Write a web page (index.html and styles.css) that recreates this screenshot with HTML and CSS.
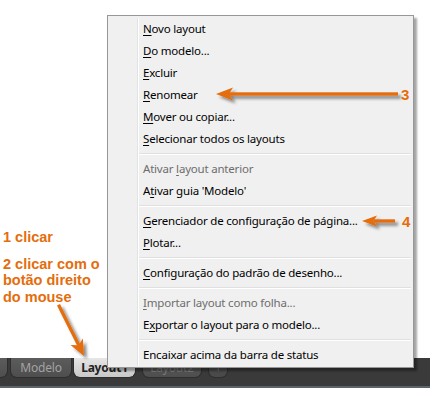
FILE: index.html
```html
<!DOCTYPE html>
<html lang="pt">
  <head>
    <meta charset="UTF-8" />
    <title>Layout menu</title>
    <link rel="stylesheet" href="styles.css">
  </head>
  <body>
    <div class="stage">
      <div class="notes">
        <p class="note-1">1 clicar</p>
        <p>2 clicar com o<br />botão direito<br />do mouse</p>
      </div>
    </div>

    <div class="tabbar">
      <div class="tab tab-edge"></div>
      <div class="tab model">Modelo</div>
      <div class="tab active">Layout1</div>
      <div class="tab dim">Layout2</div>
      <div class="tab plus">+</div>
    </div>

    <!-- context menu over the tabs -->
    <div class="menu">
      <div class="gutter"></div>
      <ul class="items">
        <li><u>N</u>ovo layout</li>
        <li><u>D</u>o modelo...</li>
        <li><u>E</u>xcluir</li>
        <li><u>R</u>enomear</li>
        <li><u>M</u>over ou copiar...</li>
        <li><u>S</u>elecionar todos os layouts</li>
        <li class="sep"></li>
        <li class="off">Ativar <u>l</u>ayout anterior</li>
        <li>A<u>t</u>ivar guia 'Modelo'</li>
        <li class="sep"></li>
        <li><u>G</u>erenciador de configuração de página...</li>
        <li><u>P</u>lotar...</li>
        <li class="sep"></li>
        <li><u>C</u>onfiguração do padrão de desenho...</li>
        <li class="sep"></li>
        <li class="off"><u>I</u>mportar layout como folha...</li>
        <li>E<u>x</u>portar o layout para o modelo...</li>
        <li class="sep"></li>
        <li>Encaixar acima da barra de status</li>
      </ul>
    </div>

    <svg class="arrows" width="440" height="396" viewBox="0 0 440 396">
      <defs>
        <filter id="shade" x="-20%" y="-50%" width="140%" height="200%">
          <feDropShadow dx="3" dy="3" stdDeviation="1.5" flood-color="#000" flood-opacity="0.45" />
        </filter>
      </defs>
      <g fill="#e46d0c" stroke="none" filter="url(#shade)">
        <rect x="229" y="92.3" width="169" height="3.4" />
        <polygon points="216,94 233,87.5 229,94 233,100.5" />
        <rect x="374" y="219.3" width="21" height="3.4" />
        <polygon points="362,221 377,215.5 373.5,221 377,226.5" />
        <polygon points="57,305.5 60,304 80.3,344.5 77.3,346" />
        <polygon points="84,356 82.9,338.5 78.6,345.3 70.5,344.9" />
      </g>
      <text class="num" x="401" y="100">3</text>
      <text class="num" x="402" y="227">4</text>
    </svg>
  </body>
</html>
```

FILE: styles.css
```css
*{
    margin: 0px;
    padding: 0px;
    box-sizing: border-box;
}
body{
    background: #fff;
    width: 440px;
    height: 396px;
    position: relative;
    overflow: hidden;
    font-family: "Noto Sans", "Open Sans", sans-serif;
}
.stage{
    height: 358px;
}
.notes{
    padding: 229px 0 0 3px;
    color: #e46d0c;
    font-family: "Liberation Sans", Arial, sans-serif;
    font-weight: bold;
    font-size: 14.5px;
    line-height: 16.5px;
}
.note-1{
    margin-bottom: 10px;
}

.tabbar{
    width: 430px;
    height: 30px;
    background: #3a3a3a;
    border-bottom: 2px solid #5b636d;
    display: flex;
    align-items: flex-start;
}
.tab{
    height: 20px;
    background: linear-gradient(#5c5c5c, #4e4e4e);
    color: #a3a3a3;
    font-size: 12px;
    letter-spacing: -0.2px;
    line-height: 19px;
    text-align: center;
    border-radius: 0 0 7px 7px;
    border: 1px solid #2e2e2e;
    border-top: 0;
}
.tab-edge{
    width: 8px;
    border-radius: 0 0 7px 0;
    border-left: 0;
}
.tab.model{
    width: 62px;
    margin-left: 2px;
}
.tab.active{
    width: 63px;
    margin-left: 1px;
    background: linear-gradient(#e6e6e6, #c8c8c8);
    color: #222;
    font-weight: bold;
}
.tab.dim{
    width: 60px;
    margin-left: 6px;
    color: #7a7a7a;
}
.tab.plus{
    width: 20px;
    margin-left: 6px;
    background: #4a4a4a;
    color: #777;
}

.menu{
    position: absolute;
    left: 107px;
    top: 15px;
    width: 307px;
    height: 353px;
    background: #f0f0f0;
    border: 1px solid #979797;
    padding: 2px 2px 1px;
    display: flex;
    box-shadow: 3px 3px 2px rgba(0, 0, 0, 0.35);
}
.gutter{
    width: 28px;
    border-right: 1px solid #e2e3e3;
    box-shadow: 1px 0 0 #fff;
}
.items{
    flex: 1;
    list-style: none;
    font-size: 11.5px;
    letter-spacing: -0.2px;
    color: #000;
}
.items li{
    height: 22px;
    line-height: 22px;
    padding-left: 5px;
    white-space: nowrap;
}
.items u{
    text-underline-offset: 2px;
}
.items li.off{
    color: #6d6d6d;
}
.items li.sep{
    height: 8px;
    padding: 0;
    margin-left: 1px;
    position: relative;
}
.items li.sep::after{
    content: "";
    position: absolute;
    left: 0;
    right: 0;
    top: 3px;
    height: 1px;
    background: #e0e0e0;
    box-shadow: 0 1px 0 #fff;
}

.arrows{
    position: absolute;
    left: 0;
    top: 0;
}
.num{
    font-family: "Liberation Sans", Arial, sans-serif;
    font-weight: bold;
    font-size: 15px;
    fill: #e46d0c;
}
```
